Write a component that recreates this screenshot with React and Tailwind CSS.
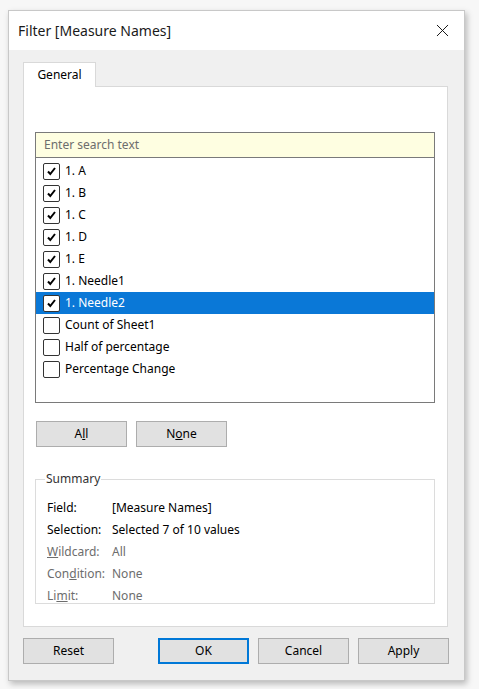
import { X } from "lucide-react";

const items = [
  { label: "1. A", checked: true },
  { label: "1. B", checked: true },
  { label: "1. C", checked: true },
  { label: "1. D", checked: true },
  { label: "1. E", checked: true },
  { label: "1. Needle1", checked: true },
  { label: "1. Needle2", checked: true, selected: true },
  { label: "Count of Sheet1", checked: false },
  { label: "Half of percentage", checked: false },
  { label: "Percentage Change", checked: false },
];

const Check = ({ checked }) => (
  <div className="w-[17px] h-[17px] bg-white border border-[#333] rounded-[2px] flex items-center justify-center shrink-0">
    {checked && (
      <svg width="11" height="11" viewBox="0 0 11 11">
        <path d="M2 5.5 L4.3 8 L9 2" fill="none" stroke="#000" strokeWidth="2" />
      </svg>
    )}
  </div>
);

const WinButton = ({ children, primary }) => (
  <button
    className={
      "w-[91px] h-[26px] bg-[#e1e1e1] text-[12px] text-black flex items-center justify-center " +
      (primary ? "border-2 border-[#0078d7]" : "border border-[#adadad]")
    }
  >
    {children}
  </button>
);

const SummaryRow = ({ label, value, dim }) => (
  <div className={"flex h-[22px] items-center " + (dim ? "text-[#6d6d6d]" : "text-black")}>
    <span className="w-[65px]">{label}</span>
    <span>{value}</span>
  </div>
);

export default function App() {
  return (
    <div
      className="w-[479px] h-[689px] bg-[#f7f7f7] pt-[10px] pl-[8px]"
      style={{ fontFamily: '"Noto Sans", "Open Sans", sans-serif' }}
    >
      <div className="w-[457px] h-[671px] flex flex-col bg-[#f0f0f0] border border-[#c8c8c8] shadow-[2px_3px_6px_rgba(0,0,0,0.25)]">
        <div className="h-[39px] bg-white flex items-center justify-between pl-[9px] pr-[11px] shrink-0">
          <span className="text-[14px] text-[#1a1a1a]">Filter [Measure Names]</span>
          <X className="w-[21px] h-[21px] text-[#111]" strokeWidth={1.1} />
        </div>

        <div className="flex flex-col px-[14px] pt-[12px]">
          <div className="w-[73px] h-[25px] bg-white border border-[#d9d9d9] border-b-0 -mb-px relative flex items-center justify-center text-[12px] text-black">
            General
          </div>
          <div className="w-[425px] h-[541px] bg-white border border-[#d9d9d9] pl-[11px] pt-[45px]">
            <div className="w-[400px] h-[271px] border border-[#7a7a7a] flex flex-col">
              <div className="h-[25px] bg-[#fefee1] border-b border-[#7a7a7a] flex items-center pl-[8px] text-[12px] text-[#6d6d6d]">
                Enter search text
              </div>
              <div className="pt-[2px]">
                {items.map((it) => (
                  <div
                    key={it.label}
                    className={
                      "h-[22px] flex items-center pl-[7px] gap-[5px] text-[12px] " +
                      (it.selected ? "bg-[#0a78d7] text-white" : "text-black")
                    }
                  >
                    <Check checked={it.checked} />
                    <span>{it.label}</span>
                  </div>
                ))}
              </div>
            </div>

            <div className="flex gap-[9px] mt-[18px] ml-px">
              <WinButton>
                A<span className="underline">l</span>l
              </WinButton>
              <WinButton>
                N<span className="underline">o</span>ne
              </WinButton>
            </div>

            <fieldset className="w-[400px] h-[134px] mt-[23px] border border-[#dcdcdc] pl-[11px] pr-[8px] pt-[9px] text-[12px]">
              <legend className="px-[1px] -ml-[2px] text-[#333]">Summary</legend>
              <SummaryRow label="Field:" value="[Measure Names]" />
              <SummaryRow label="Selection:" value="Selected 7 of 10 values" />
              <SummaryRow
                dim
                label={<><span className="underline">W</span>ildcard:</>}
                value="All"
              />
              <SummaryRow
                dim
                label={<>Con<span className="underline">d</span>ition:</>}
                value="None"
              />
              <SummaryRow
                dim
                label={<>Li<span className="underline">m</span>it:</>}
                value="None"
              />
            </fieldset>
          </div>

          <div className="flex mt-[11px]">
            <WinButton>Reset</WinButton>
            <div className="flex gap-[9px] ml-[44px]">
              <WinButton primary>OK</WinButton>
              <WinButton>Cancel</WinButton>
              <WinButton>Apply</WinButton>
            </div>
          </div>
        </div>
      </div>
    </div>
  );
}
